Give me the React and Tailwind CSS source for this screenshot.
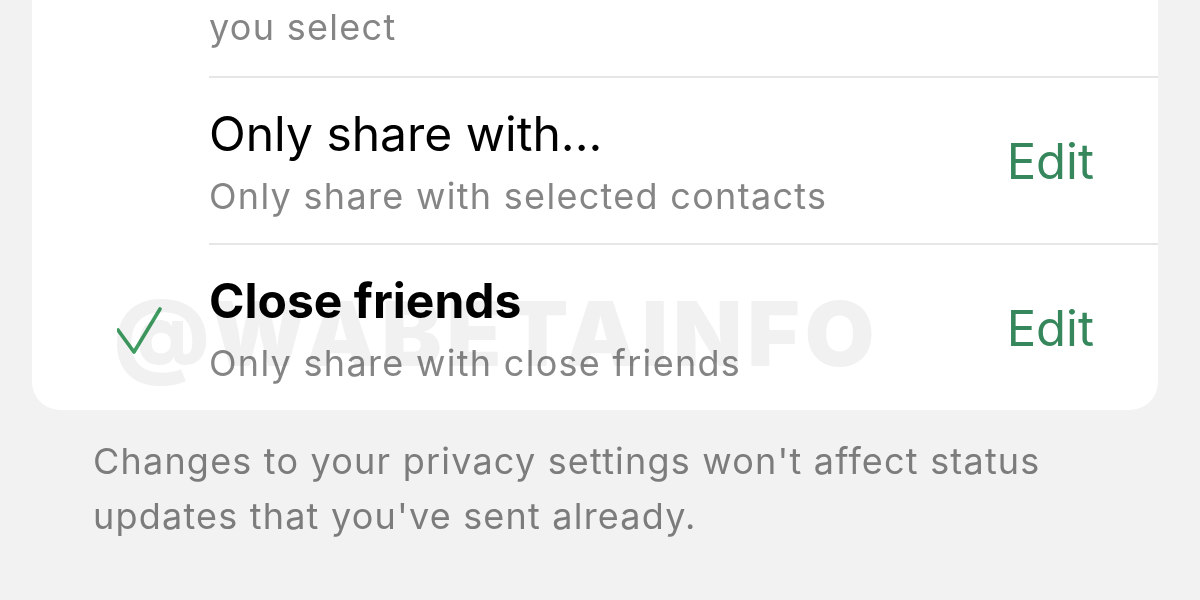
const Row = ({ title, subtitle, bold, checked }) => (
  <div className="flex h-[167px]">
    <div className="w-[177px] flex items-center justify-center pl-[40px]">
      {checked && (
        <svg width="48" height="48" viewBox="0 0 48 48" className="mt-[8px]">
          <path d="M1 23 L17 45 L43 2" fill="none" stroke="#3f9d62" strokeWidth="3.6" strokeLinecap="round" strokeLinejoin="round" />
        </svg>
      )}
    </div>
    <div className="flex-1 flex items-center justify-between border-t-2 border-[#e6e6e6] pr-[64px] pt-[3px]">
      <div className="flex flex-col">
        <span className={`text-[48px] leading-[56px] text-black ${bold ? 'font-bold' : 'font-normal'}`}>{title}</span>
        <span className="mt-[12px] text-[36px] leading-[44px] tracking-[1.3px] text-[#858585]">{subtitle}</span>
      </div>
      <span className="text-[49px] text-[#36875b]">Edit</span>
    </div>
  </div>
);

export default function App() {
  return (
    <div className="w-[1200px] h-[600px] bg-[#f2f2f2] overflow-hidden font-['Inter',sans-serif]">
      <div className="relative ml-[32px] w-[1126px] bg-white rounded-b-[28px]">
        <div className="h-[76px] pl-[177px] pt-[5px]">
          <span className="text-[36px] leading-[44px] tracking-[1.3px] text-[#858585]">you select</span>
        </div>
        <Row title="Only share with..." subtitle="Only share with selected contacts" />
        <Row title="Close friends" subtitle="Only share with close friends" bold checked />
        {/* watermark */}
        <div className="absolute left-[82px] top-[266px] text-[90px] font-black tracking-[5px] text-[#f1f1f1] mix-blend-multiply pointer-events-none select-none">
          @WABETAINFO
        </div>
      </div>
      <p className="pl-[93px] pr-[100px] pt-[24px] text-[36px] leading-[55px] tracking-[1.2px] text-[#7c7c7c]">
        Changes to your privacy settings won't affect status updates that you've sent already.
      </p>
    </div>
  );
}
